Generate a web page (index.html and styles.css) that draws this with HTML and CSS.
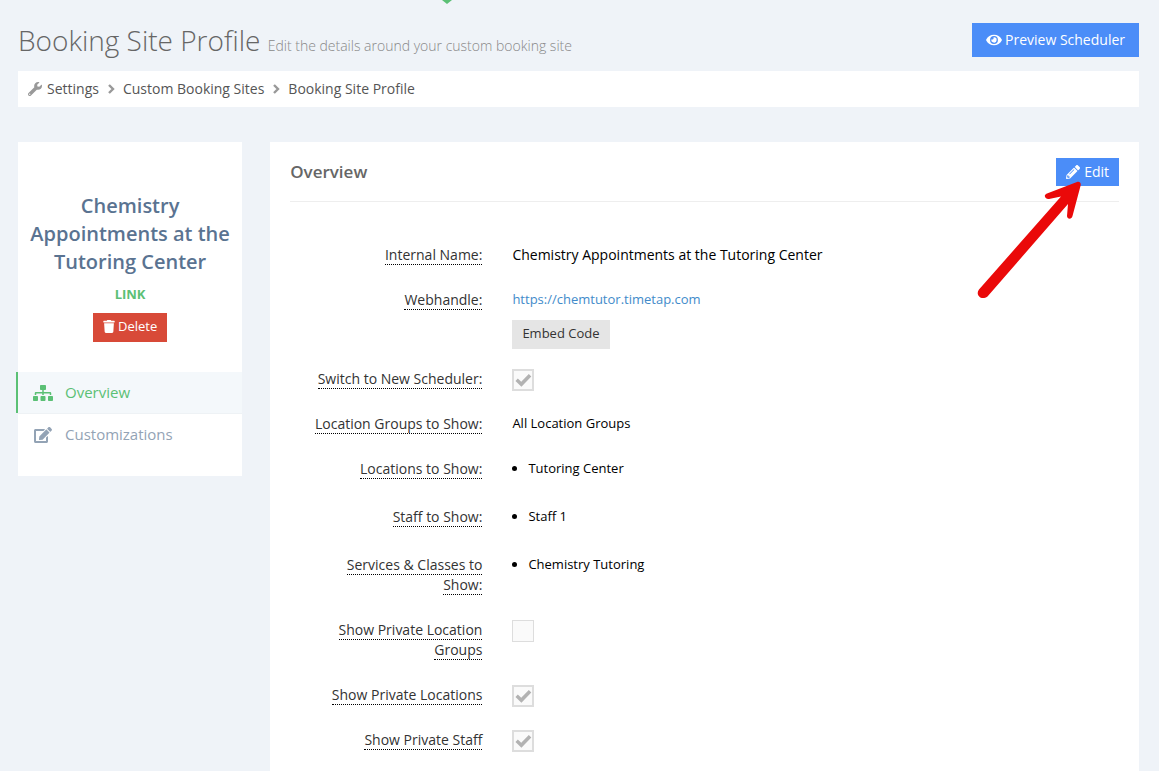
FILE: index.html
```
<!DOCTYPE html>
<html lang="en">
<head>
    <meta charset="utf-8">
    <title>Booking Site Profile</title>
    <link rel="stylesheet" href="styles.css">
</head>
<body>
    <span class="menu-pointer"></span>
    <header class="page-head">
        <h1>Booking Site Profile <small>Edit the details around your custom booking site</small></h1>
        <button type="button" class="btn btn-blue btn-lg">
            <svg width="16" height="14" viewBox="0 0 576 512"><path d="M572.52 241.4C518.29 135.59 410.93 64 288 64S57.68 135.64 3.48 241.41a32.35 32.35 0 0 0 0 29.19C57.71 376.41 165.07 448 288 448s230.32-71.64 284.52-177.41a32.35 32.35 0 0 0 0-29.19zM288 400a144 144 0 1 1 144-144 143.93 143.93 0 0 1-144 144zm0-240a95.31 95.31 0 0 0-25.31 3.79 47.85 47.85 0 0 1-66.9 66.9A95.78 95.78 0 1 0 288 160z"/></svg>
            Preview Scheduler
        </button>
    </header>

    <nav class="breadcrumb">
        <svg class="wrench" width="14" height="14" viewBox="0 0 512 512"><path d="M507.73 109.1c-2.24-9.03-13.54-12.09-20.12-5.51l-74.36 74.36-67.88-11.31-11.31-67.88 74.36-74.36c6.62-6.62 3.43-17.9-5.66-20.16-47.38-11.74-99.55.91-136.58 37.93-39.64 39.64-50.55 97.1-34.05 147.2L18.74 402.76c-24.99 24.99-24.99 65.51 0 90.5 24.99 24.99 65.51 24.99 90.5 0l213.21-213.21c50.12 16.71 107.47 5.68 147.37-34.22 37.07-37.07 49.7-89.32 37.91-136.73zM64 472c-13.25 0-24-10.75-24-24 0-13.26 10.75-24 24-24s24 10.74 24 24c0 13.25-10.75 24-24 24z"/></svg>
        <a href="#">Settings</a>
        <svg class="chevron" width="8" height="10" viewBox="0 0 8 10"><path d="M2 1l4 4-4 4"/></svg>
        <a href="#">Custom Booking Sites</a>
        <svg class="chevron" width="8" height="10" viewBox="0 0 8 10"><path d="M2 1l4 4-4 4"/></svg>
        <a href="#">Booking Site Profile</a>
    </nav>

    <div class="content">
        <aside class="sidebar">
            <h2>Chemistry Appointments at the Tutoring Center</h2>
            <a href="#" class="site-link">LINK</a>
            <button type="button" class="btn btn-red">
                <svg width="12" height="13" viewBox="0 0 448 512"><path d="M432 32H312l-9.4-18.7A24 24 0 0 0 281.1 0H166.8a23.72 23.72 0 0 0-21.4 13.3L136 32H16A16 16 0 0 0 0 48v32a16 16 0 0 0 16 16h416a16 16 0 0 0 16-16V48a16 16 0 0 0-16-16zM53.2 467a48 48 0 0 0 47.9 45h245.8a48 48 0 0 0 47.9-45L416 128H32z"/></svg>
                Delete
            </button>
            <ul class="side-menu">
                <li class="active"><a href="#">
                    <svg width="20" height="16" viewBox="0 0 640 512"><path d="M128 352H32c-17.67 0-32 14.33-32 32v96c0 17.67 14.33 32 32 32h96c17.67 0 32-14.33 32-32v-96c0-17.67-14.33-32-32-32zm-24-80h192v48h48v-48h192v48h48v-57.59c0-21.17-17.23-38.41-38.41-38.41H344v-64h40c17.67 0 32-14.33 32-32V32c0-17.67-14.33-32-32-32H256c-17.67 0-32 14.33-32 32v96c0 17.67 14.33 32 32 32h40v64H94.41C73.23 224 56 241.23 56 262.41V320h48v-48zm264 80h-96c-17.67 0-32 14.33-32 32v96c0 17.67 14.33 32 32 32h96c17.67 0 32-14.33 32-32v-96c0-17.67-14.33-32-32-32zm240 0h-96c-17.67 0-32 14.33-32 32v96c0 17.67 14.33 32 32 32h96c17.67 0 32-14.33 32-32v-96c0-17.67-14.33-32-32-32z"/></svg>
                    Overview
                </a></li>
                <li><a href="#">
                    <svg width="20" height="16" viewBox="0 0 576 512"><path d="M402.6 83.2l90.2 90.2c3.8 3.8 3.8 10 0 13.8L274.4 405.6l-92.8 10.3c-12.4 1.4-22.9-9.1-21.5-21.5l10.3-92.8L388.8 83.2c3.8-3.8 10-3.8 13.8 0zm162-22.9l-48.8-48.8c-15.2-15.2-39.9-15.2-55.2 0l-35.4 35.4c-3.8 3.8-3.8 10 0 13.8l90.2 90.2c3.8 3.8 10 3.8 13.8 0l35.4-35.4c15.2-15.3 15.2-40 0-55.2zM384 346.2V448H64V128h229.8c3.2 0 6.2-1.3 8.5-3.5l40-40c7.6-7.6 2.2-20.5-8.5-20.5H48C21.5 64 0 85.5 0 112v352c0 26.5 21.5 48 48 48h352c26.5 0 48-21.5 48-48V306.2c0-10.7-12.9-16-20.5-8.5l-40 40c-2.2 2.3-3.5 5.3-3.5 8.5z"/></svg>
                    Customizations
                </a></li>
            </ul>
        </aside>

        <main class="panel">
            <div class="panel-head">
                <h3>Overview</h3>
                <button type="button" class="btn btn-blue btn-edit">
                    <svg width="14" height="14" viewBox="0 0 512 512"><path d="M497.9 142.1l-46.1 46.1c-4.7 4.7-12.3 4.7-17 0l-111-111c-4.7-4.7-4.7-12.3 0-17l46.1-46.1c18.7-18.7 49.1-18.7 67.9 0l60.1 60.1c18.8 18.7 18.8 49.1 0 67.9zM284.2 99.8L21.6 362.4.4 483.9c-2.9 16.4 11.4 30.6 27.8 27.8l121.5-21.3 262.6-262.6c4.7-4.7 4.7-12.3 0-17l-111-111c-4.8-4.7-12.4-4.7-17.1 0zM124.1 339.9c-5.5-5.5-5.5-14.3 0-19.8l154-154c5.5-5.5 14.3-5.5 19.8 0s5.5 14.3 0 19.8l-154 154c-5.5 5.5-14.3 5.5-19.8 0zM88 424h48v36.3l-64.5 11.3-31.1-31.1L51.7 376H88v48z"/></svg>
                    Edit
                </button>
                <svg class="arrow" width="112" height="126" viewBox="974 176 112 126"><path d="M979 289.500L1061 196.500L1049 199C1045 199.500 1043 195 1047 193.500L1077 182C1079.500 181 1081.500 183 1080.500 186L1072.500 216C1071.500 220 1067 219 1067 216L1068 204L987.500 296.500C981 301 975 294.500 979 289.500Z"/></svg>
            </div>

            <div class="form-body">
                <div class="form-row">
                    <div class="label"><span>Internal Name:</span></div>
                    <div class="value name">Chemistry Appointments at the Tutoring Center</div>
                </div>
                <div class="form-row">
                    <div class="label"><span>Webhandle:</span></div>
                    <div class="value webhandle">
                        <a href="#">https://chemtutor.timetap.com</a>
                        <button type="button" class="btn btn-grey">Embed Code</button>
                    </div>
                </div>
                <div class="form-row">
                    <div class="label"><label for="newScheduler">Switch to New Scheduler:</label></div>
                    <div class="value"><input type="checkbox" id="newScheduler" checked disabled></div>
                </div>
                <div class="form-row">
                    <div class="label"><span>Location Groups to Show:</span></div>
                    <div class="value">All Location Groups</div>
                </div>
                <div class="form-row">
                    <div class="label"><span>Locations to Show:</span></div>
                    <div class="value"><ul><li>Tutoring Center</li></ul></div>
                </div>
                <div class="form-row">
                    <div class="label"><span>Staff to Show:</span></div>
                    <div class="value"><ul><li>Staff 1</li></ul></div>
                </div>
                <div class="form-row">
                    <div class="label"><span>Services &amp; Classes to Show:</span></div>
                    <div class="value"><ul><li>Chemistry Tutoring</li></ul></div>
                </div>
                <div class="form-row">
                    <div class="label"><label for="privateGroups">Show Private Location Groups</label></div>
                    <div class="value"><input type="checkbox" id="privateGroups" disabled></div>
                </div>
                <div class="form-row">
                    <div class="label"><label for="privateLocations">Show Private Locations</label></div>
                    <div class="value"><input type="checkbox" id="privateLocations" checked disabled></div>
                </div>
                <div class="form-row">
                    <div class="label"><label for="privateStaff">Show Private Staff</label></div>
                    <div class="value"><input type="checkbox" id="privateStaff" checked disabled></div>
                </div>
            </div>
        </main>
    </div>
</body>
</html>
```
FILE: styles.css
```
* {
    box-sizing: border-box;
}
body {
    font-family: "Open Sans", sans-serif;
    font-size: 13px;
    line-height: 20px;
    background-color: #eff3f8;
    color: #000;
    margin: 0;
    padding: 23px 20px 0 18px;
}
h1, h2, h3, ul {
    margin: 0;
    padding: 0;
}
a {
    color: #428bca;
    text-decoration: none;
}
svg {
    fill: currentColor;
    flex-shrink: 0;
}

/* tip of the active top menu item */
.menu-pointer {
    position: absolute;
    top: 0;
    left: 442px;
    border: 5px solid transparent;
    border-top: 4px solid #5bc075;
    border-bottom: 0;
}

.btn {
    display: inline-flex;
    align-items: center;
    gap: 3px;
    border: 0;
    padding: 3px 10px 6px;
    font-family: inherit;
    font-size: 13px;
    line-height: 20px;
    color: #fff;
}
.btn-blue {
    background-color: #4b8df8;
    font-size: 14px;
}
.btn-lg {
    padding: 7px 14px;
}
.btn-edit {
    padding: 4px 10px;
    gap: 4px;
}
.btn-red {
    background-color: #d84a38;
}
.btn-grey {
    background-color: #e5e5e5;
    color: #333;
}

.page-head {
    display: flex;
    justify-content: space-between;
    align-items: flex-start;
    margin-bottom: 14px;
}
.page-head h1 {
    font-size: 28px;
    line-height: 34px;
    font-weight: 300;
    color: #666;
}
.page-head small {
    font-size: 14px;
    line-height: 20px;
    color: #888;
}

.breadcrumb {
    display: flex;
    align-items: center;
    background-color: #fff;
    padding: 8px 10px;
    margin-bottom: 35px;
    font-size: 14px;
}
.breadcrumb a {
    color: #555;
}
.wrench {
    color: #999;
    margin-right: 5px;
}
.chevron {
    margin: 0 8px;
    fill: none;
    stroke: #999;
    stroke-width: 2.4;
}

.content {
    display: flex;
    align-items: flex-start;
    gap: 28px;
}

.sidebar {
    flex: 0 0 20%;
    display: flex;
    flex-direction: column;
    align-items: center;
    background-color: #fff;
    padding: 50px 0 21px;
}
.sidebar h2 {
    padding: 0 10px;
    font-size: 20px;
    line-height: 28px;
    font-weight: 600;
    text-align: center;
    color: #5a7391;
}
.site-link {
    margin: 8px 0 9px;
    font-weight: 700;
    color: #5bc075;
}
.side-menu {
    align-self: stretch;
    list-style: none;
    margin-top: 30px;
}
.side-menu a {
    display: flex;
    align-items: center;
    gap: 12px;
    padding: 10px 15px;
    font-size: 15px;
    line-height: 21px;
    color: #93a3b5;
}
.side-menu .active {
    border-bottom: 1px solid #eef2f5;
}
.side-menu .active a {
    margin-left: -2px;
    border-left: 2px solid #5bc075;
    background-color: #f4f8fb;
    color: #5bc075;
}

.panel {
    flex: 1;
    background-color: #fff;
    padding: 16px 20px;
}
.panel-head {
    position: relative;
    display: flex;
    justify-content: space-between;
    align-items: flex-start;
    padding-bottom: 15px;
    border-bottom: 1px solid #eee;
}
.panel-head h3 {
    font-size: 17px;
    line-height: 28px;
    font-weight: 600;
    color: #666;
}
.arrow {
    position: absolute;
    top: 18px;
    right: 33px;
    fill: #ea0909;
    pointer-events: none;
}

.form-body {
    padding-top: 38px;
}
.form-row {
    display: grid;
    grid-template-columns: 1fr 3fr;
    margin-bottom: 15px;
}
.label, .value {
    padding: 5px 15px;
}
.label {
    font-size: 14px;
    text-align: right;
    color: #333;
}
.label span, .label label {
    border-bottom: 1px dotted #000;
}
.value {
    padding-bottom: 0;
    line-height: 18px;
}
.name {
    font-size: 14px;
    line-height: 20px;
}
.webhandle {
    display: flex;
    flex-direction: column;
    align-items: flex-start;
    gap: 12px;
}
.value ul {
    padding-left: 16px;
    margin-bottom: 10px;
}

input[type="checkbox"] {
    appearance: none;
    display: block;
    width: 22px;
    height: 22px;
    margin: 0;
    border: 1px solid #ddd;
    background-color: #fafafa;
}
input[type="checkbox"]:checked {
    border-width: 2px;
}
input[type="checkbox"]:checked::before {
    content: "";
    display: block;
    width: 18px;
    height: 18px;
    background-color: #b2b2b2;
    clip-path: polygon(6% 56%, 19% 42%, 38% 60%, 80% 17%, 94% 31%, 39% 87%);
}
```
